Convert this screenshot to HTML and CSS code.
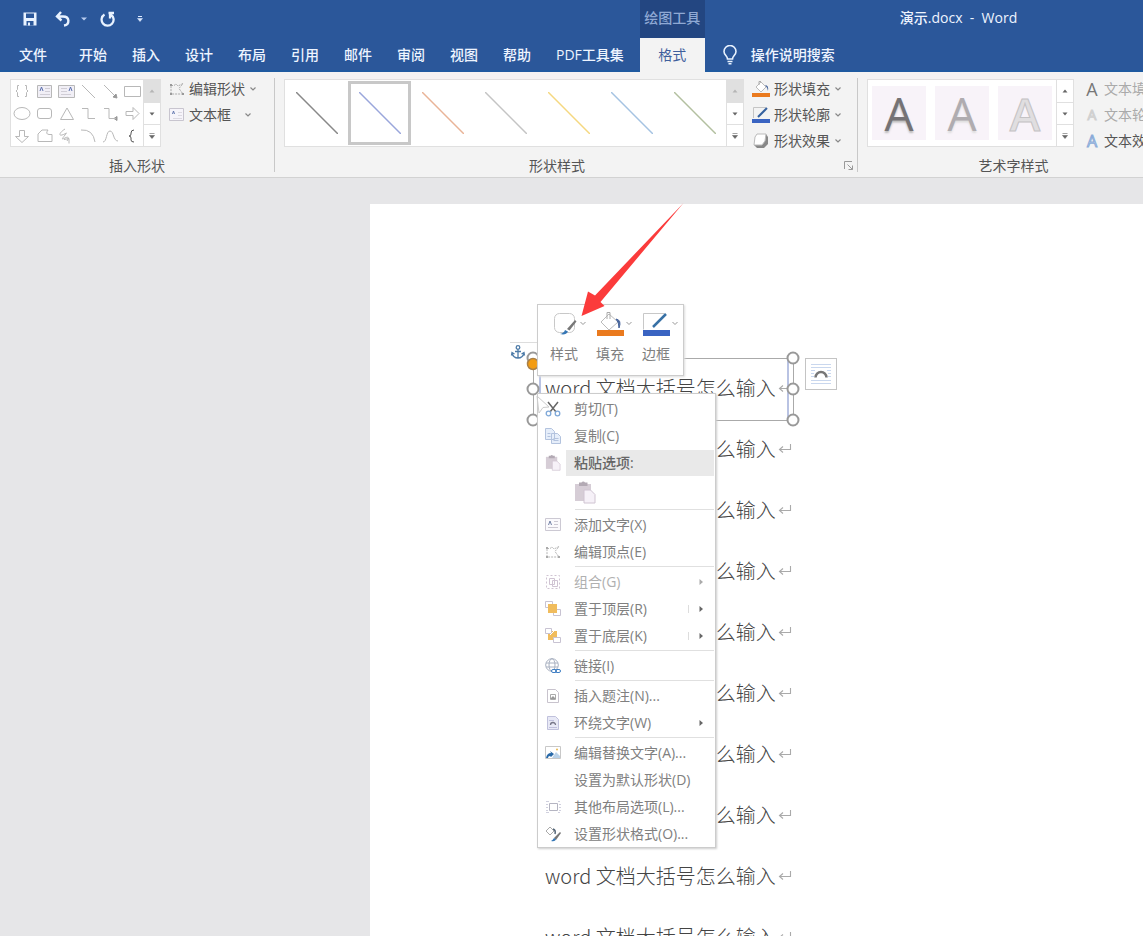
FILE: index.html
```html
<!DOCTYPE html>
<html lang="zh-CN">
<head>
<meta charset="utf-8">
<title>演示.docx - Word</title>
<link rel="stylesheet" href="styles.css">
</head>
<body>
<svg class="defs" aria-hidden="true">
  <symbol id="chev" viewBox="0 0 8 6"><path d="M1.5 1.5 4 4 6.500 1.500" fill="none" stroke="#888" stroke-width="1.200"/></symbol>
  <symbol id="up" viewBox="0 0 8 6"><path d="M1.500 4.500h5L4 1.500z" fill="currentColor"/></symbol>
  <symbol id="down" viewBox="0 0 8 6"><path d="M1.500 1.500h5L4 4.500z" fill="currentColor"/></symbol>
  <symbol id="more" viewBox="0 0 8 8"><path d="M1.500 1.500h5M1.500 3.500h5L4 6.500z" fill="currentColor" stroke="currentColor" stroke-width=".6"/></symbol>
  <symbol id="right" viewBox="0 0 6 8"><path d="M1.500 1v6L5 4z" fill="currentColor"/></symbol>
  <symbol id="ret" viewBox="0 0 14 14"><path d="M12.500 2v5.500H2M5 4.500l-3.500 3L5 10.500" fill="none" stroke="#aaa" stroke-width="1.100"/></symbol>
  <symbol id="paste" viewBox="0 0 22 24"><path d="M1 4h16v17H1z" fill="#d6cdd6"/><path d="M5 2.500h2.500a2 2 0 0 1 3.500 0h2.500V6H5z" fill="#b3aab4"/><path d="M10 10h6.500l4.500 4.500V23H10z" fill="#f6f1f8" stroke="#d0c4d2"/></symbol>
</svg>

<header class="header">
  <div class="quick">
    <button aria-label="保存"><svg width="16" height="16" viewBox="0 0 16 16"><path d="M1.500 1.500h13v13h-13z" fill="#e8f2ff"/><path d="M4 2.500h8V7H4zM4.500 10h7v4.500h-7z" fill="#2b579a"/><path d="M6 11.500h2v3H6z" fill="#e8f2ff"/></svg></button>
    <button aria-label="撤消"><svg width="16" height="16" viewBox="0 0 16 16"><path d="M6 1 2 5.500 6.500 9.500M2.500 5.500H8c7 0 7 8 1 9" fill="none" stroke="#e8f2ff" stroke-width="2.400"/></svg></button>
    <button class="quick-drop" aria-label="撤消选项"><svg width="8" height="6" viewBox="0 0 8 6"><path d="M1 1.500h6L4 4.500z" fill="#b9cdf0"/></svg></button>
    <button aria-label="重复"><svg width="16" height="16" viewBox="0 0 16 16"><path d="M4.500 3.500a6 6 0 1 0 6.500.2M8.500 2H14M10 2v5.500" fill="none" stroke="#e8f2ff" stroke-width="2.300"/></svg></button>
    <button class="quick-more" aria-label="自定义快速访问工具栏"><svg width="8" height="8" viewBox="0 0 8 8"><path d="M2 1.500h4" stroke="#dce9ff"/><path d="M1.500 3.500h5L4 6.500z" fill="#dce9ff" stroke="#dce9ff" stroke-width=".5"/></svg></button>
  </div>
  <div class="context-title">绘图工具</div>
  <div class="title">演示.docx &nbsp;-&nbsp; Word</div>
  <nav class="tabs">
    <button class="file">文件</button><button>开始</button><button>插入</button><button>设计</button><button>布局</button><button>引用</button><button>邮件</button><button>审阅</button><button>视图</button><button>帮助</button><button>PDF工具集</button>
  </nav>
  <button class="tab-active">格式</button>
  <button class="tell"><svg width="16" height="20" viewBox="0 0 16 20"><path d="M5.500 14c0-3-3.500-4-3.500-7.500a6 6 0 0 1 12 0c0 3.500-3.500 4.500-3.500 7.500zM5.500 16.500h5M6.500 18.800h3" fill="none" stroke="#e8f2ff" stroke-width="1.600"/></svg>操作说明搜索</button>
</header>

<section class="ribbon">
  <div class="group insert">
    <div class="group-body">
      <div class="gallery">
        <svg class="shapes" width="132" height="66" viewBox="0 0 132 66" fill="none" stroke="#b8b8b8">
          <path d="M8 5.500H6.500v4L5 11l1.500 1.500v4H8M14 5.500h1.500v4L17 11l-1.500 1.500v4H14"/>
          <path d="M26.500 5.500h14v12h-14z" fill="#f1eff6"/><path d="m29 11 1.500-4L32 11" stroke="#5b6fae"/><path d="M34 8.500h5M34 11.500h5M29 14.500h10" stroke="#d0cdd6"/>
          <path d="M47.500 5.500h16v12h-16z" fill="#f1eff6"/><path d="m58 11 1.500-4L61 11" stroke="#5b6fae"/><path d="M50 8.500h6M50 11.500h6M50 14.500h10" stroke="#d0cdd6"/>
          <path d="m71 5 13 13M93 5l12 12M113.500 6.500h16v10h-16z"/><path d="m106 18-4-1 3-3zM106 40.500l-3-2 3-2z" fill="#999" stroke="#999"/>
          <ellipse cx="11" cy="33.500" rx="8" ry="6"/><rect x="26.500" y="28.500" width="14" height="10" rx="2.500"/><path d="M49.500 39.500h13L56 28zM71 28.500h6v10h7M93 28.500h5v10h7M115 31.500h7v-4l6 6-6 6v-4h-7z"/>
          <path d="M8.500 50.500h5v6h4l-6.500 6-6.500-6h4zM27 61.500V54l4-4h6q-3 4 1 4.500h3v7zM54 49c-5 3-7 7-3 6s6-4 3 0-4 5 0 3 4 0 2 3M53 59.500l5-1v5M70 50q12-1 14 12M92 62c4 0 3-11 7-11s3 10 8 10"/><path d="M123 50q-3 0-3 3v1q0 2-2 2 2 0 2 2v2q0 2 3 2" stroke="#555"/>
        </svg>
        <div class="scroll"><button disabled aria-label="上一行"><svg width="8" height="6"><use href="#up"/></svg></button><button aria-label="下一行"><svg width="8" height="6"><use href="#down"/></svg></button><button aria-label="更多形状"><svg width="8" height="8"><use href="#more"/></svg></button></div>
      </div>
      <div class="commands">
        <button><svg width="16" height="16" viewBox="0 0 16 16" fill="none" stroke="#aaa"><path d="M2 4.500h3l2-1.500 2 2 5-2.500-4 5 4 5.500H2z" stroke-dasharray="2 1"/><path d="M1 3h2v2H1zM1 12h2v2H1zM13 12h2v2h-2z" fill="#999" stroke="none"/></svg>编辑形状<svg class="chev" width="8" height="6"><use href="#chev"/></svg></button>
        <button><svg width="16" height="16" viewBox="0 0 16 16" fill="none" stroke="#c8c5cf"><path d="M.5 1.500h14v12H.5z" fill="#f6f4fa"/><path d="m3.500 7 1-3 1 3" stroke="#6478b0"/><path d="M9 5.500h4M9 8.500h4M4 11.500h9" stroke="#dcd9e1"/></svg>文本框<svg class="chev wide" width="8" height="6"><use href="#chev"/></svg></button>
      </div>
    </div>
    <div class="group-label">插入形状</div>
  </div>

  <div class="group styles">
    <div class="group-body">
      <div class="gallery">
        <button class="line" aria-label="黑色线条"><svg width="42" height="42"><path d="m0 0 42 42" stroke="#888" stroke-width="1.500"/></svg></button>
        <button class="line selected" aria-label="蓝色线条"><svg width="42" height="42"><path d="m0 0 42 42" stroke="#9aa6db" stroke-width="1.500"/></svg></button>
        <button class="line" aria-label="橙色线条"><svg width="42" height="42"><path d="m0 0 42 42" stroke="#e9b498" stroke-width="1.500"/></svg></button>
        <button class="line" aria-label="灰色线条"><svg width="42" height="42"><path d="m0 0 42 42" stroke="#c4c4c4" stroke-width="1.500"/></svg></button>
        <button class="line" aria-label="金色线条"><svg width="42" height="42"><path d="m0 0 42 42" stroke="#f5d880" stroke-width="1.500"/></svg></button>
        <button class="line" aria-label="浅蓝线条"><svg width="42" height="42"><path d="m0 0 42 42" stroke="#a5c3e2" stroke-width="1.500"/></svg></button>
        <button class="line" aria-label="绿色线条"><svg width="42" height="42"><path d="m0 0 42 42" stroke="#b3c0a0" stroke-width="1.500"/></svg></button>
        <div class="scroll"><button disabled aria-label="上一行"><svg width="8" height="6"><use href="#up"/></svg></button><button aria-label="下一行"><svg width="8" height="6"><use href="#down"/></svg></button><button aria-label="更多样式"><svg width="8" height="8"><use href="#more"/></svg></button></div>
      </div>
      <div class="commands">
        <button><svg width="18" height="18" viewBox="0 0 18 18"><path d="m4 7 5-5 5 5-5 5z" fill="#fff" stroke="#bbb"/><path d="M7 5V1.500h2" fill="none" stroke="#aaa"/><path d="M13 5q4 0 3 6-1-4-3-6" fill="#46649c"/><path d="M0 13h18v4H0z" fill="#ea7a1e"/></svg>形状填充<svg class="chev" width="8" height="6"><use href="#chev"/></svg></button>
        <button><svg width="18" height="18" viewBox="0 0 18 18"><path d="M1.500 12V1.500H14" fill="none" stroke="#c5c5c5"/><path d="m6 11 9-9" stroke="#35619f" stroke-width="2"/><path d="M0 13h18v4H0z" fill="#3a64c2"/></svg>形状轮廓<svg class="chev" width="8" height="6"><use href="#chev"/></svg></button>
        <button><svg width="18" height="18" viewBox="0 0 18 18"><path d="m2 13 3 3h7l4-4V5l-2-3z" fill="#888"/><path d="M5 2h9l-1 7-3 4H2l1-8z" fill="#fff" stroke="#bbb"/></svg>形状效果<svg class="chev" width="8" height="6"><use href="#chev"/></svg></button>
      </div>
    </div>
    <div class="group-label with-launcher"><span>形状样式</span><button class="launcher" aria-label="设置形状格式"><svg width="10" height="10" viewBox="0 0 10 10" fill="none" stroke="#999"><path d="M.5 8V.5H8M3.500 3.500l5 5M8.500 4.500v4h-4"/></svg></button></div>
  </div>

  <div class="group wordart-group">
    <div class="group-body">
      <div class="gallery">
        <div class="wordart">
          <button class="wa1">A</button><button class="wa2">A</button><button class="wa3">A</button>
        </div>
        <div class="scroll"><button aria-label="上一行"><svg width="8" height="6"><use href="#up"/></svg></button><button aria-label="下一行"><svg width="8" height="6"><use href="#down"/></svg></button><button aria-label="更多艺术字"><svg width="8" height="8"><use href="#more"/></svg></button></div>
      </div>
      <div class="commands">
        <button class="dim"><b class="letter a-fill">A</b>文本填充</button>
        <button class="dim"><b class="letter a-line">A</b>文本轮廓</button>
        <button><b class="letter a-fx">A</b>文本效果</button>
      </div>
    </div>
    <div class="group-label">艺术字样式</div>
  </div>
</section>

<main class="workspace">
  <article class="page">
    <p>word 文档大括号怎么输入<svg width="14" height="14"><use href="#ret"/></svg></p>
    <p>word 文档大括号怎么输入<svg width="14" height="14"><use href="#ret"/></svg></p>
    <p>word 文档大括号怎么输入<svg width="14" height="14"><use href="#ret"/></svg></p>
    <p>word 文档大括号怎么输入<svg width="14" height="14"><use href="#ret"/></svg></p>
    <p>word 文档大括号怎么输入<svg width="14" height="14"><use href="#ret"/></svg></p>
    <p>word 文档大括号怎么输入<svg width="14" height="14"><use href="#ret"/></svg></p>
    <p>word 文档大括号怎么输入<svg width="14" height="14"><use href="#ret"/></svg></p>
    <p>word 文档大括号怎么输入<svg width="14" height="14"><use href="#ret"/></svg></p>
    <p>word 文档大括号怎么输入<svg width="14" height="14"><use href="#ret"/></svg></p>
    <p>word 文档大括号怎么输入<svg width="14" height="14"><use href="#ret"/></svg></p>
  </article>

  <svg class="selection" width="300" height="96" viewBox="0 0 300 96" fill="none">
    <path d="M0 6.500h28" stroke="#ddd"/>
    <path d="M23.500 22.500h260v62h-260z" stroke="#aaa"/>
    <path d="M30 24v60M278 24v60" stroke="#b9c3e3" stroke-width="2"/>
    <g fill="#fff" stroke="#999" stroke-width="2"><circle cx="23" cy="22" r="5.500"/><circle cx="23" cy="53" r="5.500"/><circle cx="23" cy="84" r="5.500"/><circle cx="283" cy="22" r="5.500"/><circle cx="283" cy="53" r="5.500"/><circle cx="283" cy="84" r="5.500"/><circle cx="23" cy="28" r="5.500" fill="#f39c12" stroke="#a98048" stroke-width="1.500"/></g>
    <g stroke="#4d7ba8" stroke-width="1.300"><circle cx="8" cy="11.500" r="1.800"/><path d="M8 13.500V22M5 15.500h6M2 17c1 4 3 5 6 5s5-1 6-5M1.500 19.500l.5-3 2.500 1.500M14.500 19.500l-.5-3-2.500 1.500"/></g>
  </svg>

  <button class="layout-options" aria-label="布局选项"><svg width="24" height="24" viewBox="0 0 24 24" fill="none"><path d="M2 2.500h20M2 5.500h20M2 8.500h4M18 8.500h4M2 11.500h3M19 11.500h3M2 14.500h3M19 14.500h3M2 18.500h20M2 21.500h20" stroke="#c9d7ee"/><path d="M6.500 15.500a5.500 5.500 0 0 1 11 0" stroke="#777" stroke-width="2.500"/></svg></button>

  <div class="mini-toolbar">
    <button><svg width="46" height="26" viewBox="0 0 46 26"><rect x="13.500" y="2.500" width="20" height="19" rx="5" fill="#fff" stroke="#c8c8c8"/><path d="m26 18 8-9 1.500 1.500-7 9z" fill="#777"/><path d="M19 23q4-1 5-4l3 1.500q-2 4-8 2.500" fill="#3476b5"/><path d="m39.500 11 2.500 2.500 2.500-2.500" fill="none" stroke="#999"/></svg>样式</button>
    <button><svg width="46" height="26" viewBox="0 0 46 26"><path d="m14 11 8-8 9 8-9 8z" fill="#fff" stroke="#bbb"/><path d="M20 8V1.500h3V8" fill="none" stroke="#aaa"/><path d="M29 8q6 1 3 9 0-6-3-9" fill="#46649c" stroke="#46649c"/><path d="M10 19h27v6H10z" fill="#ea7a1e"/><path d="m39.500 11 2.500 2.500 2.500-2.500" fill="none" stroke="#999"/></svg>填充</button>
    <button><svg width="46" height="26" viewBox="0 0 46 26"><path d="M10.500 18.500v-16h21" fill="none" stroke="#c8c8c8"/><path d="m20 16 13-13" stroke="#3871a5" stroke-width="2.500"/><path d="M10 19h27v6H10z" fill="#3a64c2"/><path d="m39.500 11 2.500 2.500 2.500-2.500" fill="none" stroke="#999"/></svg>边框</button>
  </div>

  <div class="menu" role="menu">
    <button role="menuitem"><svg width="16" height="16" viewBox="0 0 16 16" fill="none"><path d="m3 1 8 10M13 1 5 11" stroke="#666" stroke-width="1.500"/><circle cx="3.500" cy="12.500" r="2.300" stroke="#7fa8d8" stroke-width="1.300"/><circle cx="12.500" cy="12.500" r="2.300" stroke="#7fa8d8" stroke-width="1.300"/></svg>剪切(T)</button>
    <button role="menuitem"><svg width="16" height="16" viewBox="0 0 16 16" fill="#e6eefa" stroke="#b3c3de"><path d="M.5.5h6l3 3v8h-9zM6.500 5.500h6l3 3v7h-9z"/><path d="M2.500 5.500h3M2.500 8.500h3M8.500 10.500h5M8.500 12.500h5"/></svg>复制(C)</button>
    <div class="menu-heading"><svg width="16" height="17"><use href="#paste"/></svg><span>粘贴选项:</span></div>
    <div class="paste-row"><button role="menuitem" aria-label="粘贴"><svg width="22" height="24"><use href="#paste"/></svg></button></div>
    <hr>
    <button role="menuitem"><svg width="16" height="16" viewBox="0 0 16 16" fill="none" stroke="#ccc9d3"><path d="M.5 1.500h15v12H.5z" fill="#fbfafd"/><path d="m3.500 8 1.500-4 1.500 4" stroke="#7584a8"/><path d="M9 4.500h4M9 7.500h4M3 10.500h10"/></svg>添加文字(X)</button>
    <button role="menuitem"><svg width="16" height="16" viewBox="0 0 16 16" fill="none" stroke="#b5b5b5"><path d="M2 4.500h3l2-1.500 2 2 5-2.500-4 5 4 5.500H2z" stroke-dasharray="2 1"/><path d="M1 3h2v2H1zM1 12h2v2H1zM13 12h2v2h-2z" fill="#aaa" stroke="none"/></svg>编辑顶点(E)</button>
    <hr>
    <button role="menuitem" disabled><svg width="16" height="16" viewBox="0 0 16 16" fill="none" stroke="#d0c4d3"><path d="M1.500 1.500h13v13h-13z" stroke-dasharray="2 2"/><path d="M4.500 4.500h5v6h-5zM7.500 6.500h5v6h-5z"/></svg>组合(G)<svg class="arrow" width="6" height="8"><use href="#right"/></svg></button>
    <button role="menuitem"><svg width="16" height="16" viewBox="0 0 16 16"><path d="M.5.500h7v6h-7zM8.500 8.500h7v6h-7z" fill="#fff" stroke="#c8c3d2"/><path d="M3 3h9v9H3z" fill="#f0bc5d"/></svg>置于顶层(R)<svg class="arrow split" width="6" height="8"><use href="#right"/></svg></button>
    <button role="menuitem"><svg width="16" height="16" viewBox="0 0 16 16"><path d="M3 3h9v9H3z" fill="#f0bc5d"/><path d="M.5.500h6v5h-6zM8.500 9.500h7v5h-7z" fill="#fff" stroke="#c8c3d2"/><path d="M5 7 9 3" stroke="#fff"/></svg>置于底层(K)<svg class="arrow split" width="6" height="8"><use href="#right"/></svg></button>
    <hr>
    <button role="menuitem"><svg width="16" height="16" viewBox="0 0 16 16" fill="none" stroke="#a8b0c0"><circle cx="7" cy="7" r="6.300"/><ellipse cx="7" cy="7" rx="3" ry="6.300"/><path d="M1 5h12M1 9h12"/><rect x="6.500" y="11.500" width="5" height="3" rx="1.500" fill="#fff" stroke="#3f7fc4"/><rect x="10.500" y="11.500" width="5" height="3" rx="1.500" stroke="#3f7fc4"/></svg>链接(I)</button>
    <hr>
    <button role="menuitem"><svg width="16" height="16" viewBox="0 0 16 16" fill="none" stroke="#c8c3cd"><path d="M2.500 1.500h8l3 3v10h-11z"/><path d="M5.500 6.500h5v5h-5z" stroke="#aaa"/><path d="m5 11 3-3 3 3z" fill="#999" stroke="none"/></svg>插入题注(N)...</button>
    <button role="menuitem"><svg width="16" height="16" viewBox="0 0 16 16" fill="none" stroke="#c0c1dc"><path d="M2.500 1.500h8l3 3v10h-11z" fill="#e8e9f6"/><path d="M4 12.500h8M4 5.500h5"/><path d="M5.500 10a2.500 2.500 0 0 1 5 0" stroke="#778" stroke-width="1.300"/></svg>环绕文字(W)<svg class="arrow" width="6" height="8"><use href="#right"/></svg></button>
    <hr>
    <button role="menuitem"><svg width="16" height="16" viewBox="0 0 16 16"><path d="M.5 1.500h15v12H.5z" fill="#fff" stroke="#c8c8c8"/><path d="m7 13 4-6 4 4v2z" fill="#b9d1e8"/><path d="M1 13q1-5 5-5l-1-2 4 3-3 3-1-1q-2 0-2 2z" fill="#2869a8"/><circle cx="12" cy="4.500" r="1" fill="#e8b84d"/></svg>编辑替换文字(A)...</button>
    <button role="menuitem"><i class="no-icon"></i>设置为默认形状(D)</button>
    <button role="menuitem"><svg width="16" height="16" viewBox="0 0 16 16" fill="none" stroke="#b5b5c2"><path d="M4.500 4.500h8v7h-8z"/><path d="M1 2.500h3M1 5.500h2M1 8.500h2M1 11.500h2M1 13.500h3M13 2.500h2M14 5.500h2M14 8.500h2M14 11.500h2M13 13.500h2" stroke="#d0d0de"/></svg>其他布局选项(L)...</button>
    <button role="menuitem"><svg width="16" height="16" viewBox="0 0 16 16"><path d="m1 5 4-4 4 4-4 4z" fill="#fff" stroke="#aaa"/><path d="M8 3q3 1 2 5" fill="none" stroke="#567" stroke-width="1.500"/><path d="m9 12 6-6 1 1-5 7z" fill="#777"/><path d="M6 15q2-1 3-3l2 1.500Q10 16 6 15" fill="#3476b5"/></svg>设置形状格式(O)...</button>
  </div>

  <svg class="pointer" width="16" height="20" viewBox="0 0 16 20"><path d="m1 1 12 11-6 .5L3 18z" fill="none" stroke="#ccc"/></svg>
  <svg class="callout" width="106" height="116" viewBox="0 0 106 116"><path d="M1.500 114 8 89.500l7 4L103.500 1 20.500 100l4 4z" fill="#fb3b3b"/></svg>
</main>
</body>
</html>
```
FILE: styles.css
```css
* { box-sizing: border-box; }

body {
  margin: 0;
  height: 100vh;
  display: flex;
  flex-direction: column;
  overflow: hidden;
  background: #e6e6e8;
  color: #555;
  font: 14px/20px "Open Sans", "Noto Sans CJK SC", sans-serif;
}

button {
  margin: 0;
  padding: 0;
  border: 0;
  background: none;
  color: inherit;
  font: inherit;
  white-space: nowrap;
}

svg { flex: none; display: block; }
.defs { position: absolute; width: 0; height: 0; }

/* Title bar and tabs */
.header {
  flex: none;
  display: grid;
  grid-template-columns: auto auto 1fr;
  grid-template-rows: 38px 34px;
  background: #2b579a;
  box-shadow: inset 0 -2px #1f5aa0;
  color: #eef4ff;
  font-weight: 500;
}
.quick { display: flex; align-items: center; padding-left: 22px; }
.quick button + button { margin-left: 17px; }
.quick button.quick-drop { margin-left: 9px; }
.quick button.quick-drop + button { margin-left: 12px; }
.quick button.quick-more { margin-left: 20px; }
.context-title {
  display: flex;
  align-items: center;
  justify-content: center;
  padding-bottom: 2px;
  background: #234681;
  color: #8fa9d4;
}
.title { align-self: center; padding-left: 195px; padding-bottom: 2px; white-space: nowrap; }
.tabs { display: flex; align-items: center; gap: 25px; padding: 0 16px 0 19px; }
.tabs .file { margin-right: 7px; }
.tab-active { width: 65px; background: #f3f3f3; color: #3f5f9c; font-weight: 400; }
.tell { display: flex; align-items: center; gap: 13px; padding-left: 17px; }

/* Ribbon */
.ribbon {
  flex: none;
  display: flex;
  padding: 4px 0 0;
  background: #f3f3f3;
  border-bottom: 1px solid #d2d2d2;
}
.group { flex: none; padding: 0 10px; position: relative; }
.insert { padding-right: 17px; }
.styles { padding-right: 15px; }
.group + .group::before {
  content: "";
  position: absolute;
  left: 0;
  top: 2px;
  bottom: 5px;
  border-left: 1px solid #c8c8c8;
}
.group-body { display: flex; gap: 8px; }
.wordart-group .group-body { gap: 10px; }
.gallery {
  display: flex;
  height: 68px;
  margin-top: 3px;
  border: 1px solid #e0e0e0;
  background: #fff;
}
.scroll { display: grid; grid-template-rows: repeat(3, 1fr); width: 17px; border-left: 1px solid #e0e0e0; color: #666; }
.scroll button { display: grid; place-items: center; }
.scroll button + button { border-top: 1px solid #e0e0e0; }
.scroll button:disabled { background: #e0e0e0; color: #b5b5b5; }
.commands { display: grid; grid-template-rows: repeat(3, 26px); justify-items: start; }
.commands button { display: flex; align-items: center; gap: 4px; }
.commands .wide { margin-left: 9px; }
.commands .dim { color: #aaa; }
.group-label { padding: 2px 0 1px; text-align: center; }
.insert .group-label { padding-left: 7px; }
.with-launcher { display: flex; align-items: center; }
.with-launcher span { flex: 1; padding-right: 14px; }
.launcher { margin-right: -12px; }
.line { width: 63px; display: grid; place-items: center; }
.selected { border: 3px solid #c8c8c8; margin: 1px 0; }
.wordart { display: flex; align-items: center; gap: 9px; padding: 0 4px; }
.wordart button {
  width: 54px;
  height: 54px;
  background: #f8f3f9;
  font: 500 46px/54px "Open Sans", sans-serif;
}
.wordart .wa1 { color: #757275; text-shadow: 0 2px 2px #bbb; }
.wordart .wa2 { color: #b0acb0; text-shadow: 0 2px 2px #ddd; }
.wordart .wa3 { color: #e0dee0; font-weight: 600; -webkit-text-stroke: 1px #c4c2c4; }
.letter { width: 16px; font: 400 18px/20px "Open Sans", sans-serif; text-align: center; }
.a-fill { color: #777; }
.a-line { color: #ddd; -webkit-text-stroke: 1px #d0d0d0; font-size: 14px; }
.a-fx { color: #e6f0fb; -webkit-text-stroke: 1px #8cacd8; font-size: 16px; }

/* Document */
.workspace { position: relative; flex: 1; min-height: 0; display: flex; padding: 26px 0 0 370px; }
.page {
  flex: 1;
  padding: 153px 0 0 175px;
  background: #fff;
  overflow: hidden;
  color: #444;
  font: 300 20px/61px "Noto Sans CJK SC", sans-serif;
}
.page p { display: flex; align-items: center; gap: 2px; margin: 0; white-space: pre; }

/* Layers floating over the document */
.selection, .layout-options, .mini-toolbar, .menu, .pointer, .callout { position: absolute; }
.selection { left: 510px; top: 158px; }
.layout-options {
  left: 805px;
  top: 180px;
  width: 32px;
  height: 32px;
  display: grid;
  place-items: center;
  border: 1px solid #c4c4c4;
  background: #fff;
}
.mini-toolbar {
  left: 537px;
  top: 126px;
  display: flex;
  padding: 6px 4px 11px 3px;
  border: 1px solid #ccc;
  background: #fff;
  box-shadow: 1px 1px 2px #ddd;
  color: #808080;
}
.mini-toolbar button { display: grid; gap: 7px; justify-items: center; }
.menu {
  left: 537px;
  top: 215px;
  width: 179px;
  padding: 1px 1px 0;
  border: 1px solid #ccc;
  background: #fff;
  box-shadow: 1px 1px 2px #ccc;
  color: #808080;
}
.menu > button { display: flex; align-items: center; gap: 13px; width: 100%; height: 27px; padding: 0 10px 0 6px; text-align: left; }
.menu > button:disabled { color: #b0b0b0; }
.menu > button .arrow { margin-left: auto; color: #666; }
.menu > button:disabled .arrow { color: #aaa; }
.menu > button .split { box-sizing: content-box; padding-left: 9px; border-left: 1px solid #ddd; }
.menu hr { height: 1px; margin: 1px 0 1px 36px; border: 0; background: #e0e0e0; }
.menu-heading { display: flex; align-items: center; gap: 5px; height: 27px; padding-left: 6px; font-weight: 500; color: #666; }
.menu-heading span { flex: 1; padding: 3px 8px; background: #e9e9e9; }
.paste-row { display: flex; align-items: center; height: 32px; padding-left: 35px; }
.no-icon { width: 16px; }
.pointer { left: 536px; top: 217px; }
.callout { left: 580px; top: 24px; }
```
